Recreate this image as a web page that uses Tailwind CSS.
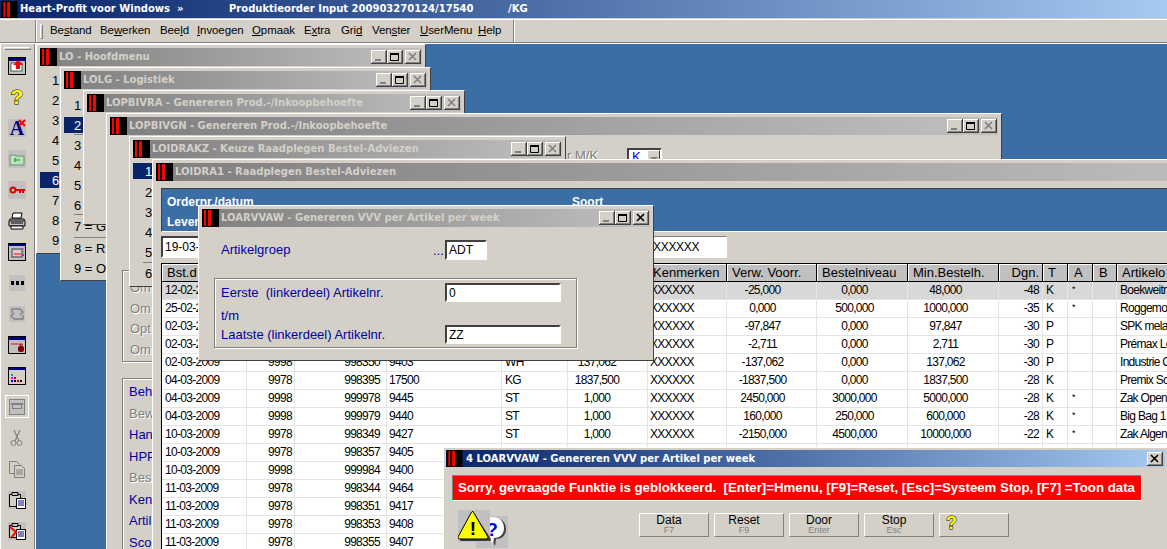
<!DOCTYPE html>
<html lang="nl">
<head>
<meta charset="UTF-8">
<script src="https://cdn.jsdelivr.net/npm/@tailwindcss/browser@4"></script>
<title>Heart-Profit voor Windows</title>
</head>
<body class="w-[1167px] h-[549px] overflow-hidden bg-[#d4d0c8] font-['Liberation_Sans',sans-serif] text-black text-[12px] leading-none">

<!-- shared icons -->
<svg class="hidden">
  <symbol id="rico" viewBox="0 0 17 18"><rect width="17" height="18" fill="#000"/><rect x="2" y="1" width="2" height="16" fill="#f00"/><rect x="6" y="1" width="3" height="16" fill="#f00"/></symbol>
  <symbol id="bmin" viewBox="0 0 16 14"><rect width="16" height="14" fill="#404040"/><rect width="15" height="13" fill="#fff"/><rect x="1" y="1" width="14" height="12" fill="#808080"/><rect x="1" y="1" width="13" height="11" fill="#d4d0c8"/><rect x="4" y="9" width="6" height="2" fill="#808080"/></symbol>
  <symbol id="bmax" viewBox="0 0 16 14"><rect width="16" height="14" fill="#404040"/><rect width="15" height="13" fill="#fff"/><rect x="1" y="1" width="14" height="12" fill="#808080"/><rect x="1" y="1" width="13" height="11" fill="#d4d0c8"/><path d="M3.5 3.5h8v7h-8z" fill="none" stroke="#000"/><rect x="3" y="3" width="9" height="2" fill="#000"/></symbol>
  <symbol id="bcls" viewBox="0 0 16 14"><rect width="16" height="14" fill="#404040"/><rect width="15" height="13" fill="#fff"/><rect x="1" y="1" width="14" height="12" fill="#808080"/><rect x="1" y="1" width="13" height="11" fill="#d4d0c8"/><path d="M4 3l7 7M11 3l-7 7" stroke="#808080" stroke-width="1.6"/></symbol>
  <symbol id="bclk" viewBox="0 0 16 14"><rect width="16" height="14" fill="#404040"/><rect width="15" height="13" fill="#fff"/><rect x="1" y="1" width="14" height="12" fill="#808080"/><rect x="1" y="1" width="13" height="11" fill="#d4d0c8"/><path d="M4 3l7 7M11 3l-7 7" stroke="#000" stroke-width="1.6"/></symbol>
</svg>

<!-- app title -->
<div class="flex items-center h-[18px] bg-linear-to-r from-[#0a246a] to-[#a6caf0] font-['DejaVu_Sans',sans-serif] font-bold text-[10px] text-white whitespace-pre">
  <svg class="w-[17px] h-[17px] ml-[1px] shrink-0"><use href="#rico"/></svg>
  <span class="ml-[2px] w-[209px]">Heart-Profit voor Windows  »</span>
  <span class="w-[279px]">Produktieorder Input 200903270124/17540</span>
  <span>/KG</span>
</div>

<!-- menu bar -->
<div class="flex h-[24px] border-y border-t-white border-b-[#808080] mt-px">
  <div class="w-[36px] border-r border-r-[#808080]"></div>
  <div class="flex items-center w-[478px] border-r border-l border-l-white border-r-[#808080] shadow-[1px_0_0_#fff]">
    <div class="w-[3px] h-[15px] ml-[3px] border border-t-white border-l-white border-r-[#808080] border-b-[#808080]"></div>
    <nav class="flex whitespace-nowrap text-[11.5px] tracking-[-0.1px] ml-[7px]">
      <span class="w-[50px]">Be<u>s</u>tand</span>
      <span class="w-[60px]">Be<u>w</u>erken</span>
      <span class="w-[37px]">Bee<u>l</u>d</span>
      <span class="w-[55px]"><u>I</u>nvoegen</span>
      <span class="w-[52px]"><u>O</u>pmaak</span>
      <span class="w-[37px]">E<u>x</u>tra</span>
      <span class="w-[31px]">Gri<u>d</u></span>
      <span class="w-[48px]">Ven<u>s</u>ter</span>
      <span class="w-[58px]"><u>U</u>serMenu</span>
      <span><u>H</u>elp</span>
    </nav>
  </div>
</div>

<div class="flex h-[506px] border-t border-t-white">
  <!-- left toolbar -->
  <aside class="w-[36px] shrink-0 border-r border-r-white shadow-[inset_-1px_0_0_#808080,inset_1px_0_0_#fff] pt-[3px]">
    <div class="h-[3px] mx-[4px] border border-t-white border-l-white border-r-[#808080] border-b-[#808080]"></div>
    <div class="flex flex-col items-center pr-[1px] [&>*]:h-[31px] [&>*]:flex [&>*]:items-center [&>*]:justify-center">
      <div><svg class="w-[18px] h-[18px]" viewBox="0 0 18 18"><rect x=".5" y=".5" width="17" height="17" fill="#c0c0c0" stroke="#000"/><rect x="1" y="1" width="16" height="3" fill="#000080"/><rect x="3" y="6" width="11" height="8" fill="#fff" stroke="#000" stroke-width=".6"/><path d="M10 3l5 5h-3v4H8V8H5z" fill="#f00"/></svg></div>
      <div><span class="font-bold text-[21px] text-[#ffff00] [-webkit-text-stroke:1px_#000] [paint-order:stroke_fill]">?</span></div>
      <div class="relative"><div class="relative w-[18px] h-[18px] bg-[#c0c0c0] flex items-center justify-center"><span class="font-['Liberation_Serif',serif] font-bold text-[20px] text-[#000080]">A</span><svg class="absolute right-0 top-0 w-[8px] h-[8px]" viewBox="0 0 8 8"><path d="M1 1l6 6M7 1l-6 6" stroke="#f00" stroke-width="2"/></svg></div></div>
      <div><svg class="w-[18px] h-[18px]" viewBox="0 0 18 18"><rect width="18" height="18" fill="#c0c0c0"/><path d="M2 5h5l1 1h8v9H2z" fill="#b0e8b0" stroke="#808080"/><path d="M6 10h6M6 10l2-2M6 10l2 2" stroke="#408040" fill="none"/></svg></div>
      <div><svg class="w-[18px] h-[18px]" viewBox="0 0 18 18"><rect width="18" height="18" fill="#c0c0c0"/><circle cx="5" cy="9" r="2.5" fill="none" stroke="#e00000" stroke-width="2"/><path d="M8 9h9M12 9v3M15 9v3" stroke="#e00000" stroke-width="2" fill="none"/></svg></div>
      <div><svg class="w-[18px] h-[18px]" viewBox="0 0 18 18"><path d="M5 1h9l-1 5H4z" fill="#fff" stroke="#000"/><path d="M2 7h14l1 2v5H1V9z" fill="#c0c0c0" stroke="#000"/><path d="M3 14h12v3H3z" fill="#fff" stroke="#000"/><path d="M2 9h14M3 11h12" stroke="#000"/></svg></div>
      <div><svg class="w-[18px] h-[18px]" viewBox="0 0 18 18"><rect x=".5" y=".5" width="17" height="17" fill="#c0c0c0" stroke="#000"/><rect x="1" y="1" width="16" height="2" fill="#000080"/><rect x="4" y="6" width="10" height="8" fill="#d4d0c8" stroke="#404040"/><path d="M6 11h7" stroke="#f00"/><path d="M15 5v2" stroke="#f0f"/><path d="M15 8v2" stroke="#0c0"/><path d="M15 11v2" stroke="#00f"/></svg></div>
      <div><svg class="w-[16px] h-[16px]" viewBox="0 0 16 16"><rect width="16" height="16" fill="#c0c0c0"/><path d="M2 6h3v4H2zM7 6h3v4H7zM12 6h3v4h-3z" fill="#000"/></svg></div>
      <div><svg class="w-[16px] h-[16px]" viewBox="0 0 16 16"><rect width="16" height="16" fill="#c0c0c0"/><path d="M3 7V3h8l3 3-3 3M14 9v4H5L2 10l3-3" fill="none" stroke="#808080" stroke-width="1.4"/></svg></div>
      <div><svg class="w-[18px] h-[18px]" viewBox="0 0 18 18"><rect x=".5" y=".5" width="17" height="17" fill="#c0c0c0" stroke="#000"/><rect x="1" y="1" width="16" height="3" fill="#000080"/><path d="M3 8h8" stroke="#f00"/><rect x="10" y="10" width="6" height="6" rx="2" fill="#800000"/><path d="M12 10V8h2v2" stroke="#800000" fill="none"/></svg></div>
      <div><svg class="w-[18px] h-[18px]" viewBox="0 0 18 18"><rect x=".5" y=".5" width="17" height="17" fill="#d4d0c8" stroke="#000"/><rect x="1" y="1" width="16" height="2" fill="#000080"/><rect x="3" y="7" width="2" height="2" fill="#0a8"/><rect x="3" y="10" width="2" height="2" fill="#f0f"/><rect x="3" y="13" width="2" height="2" fill="#00f"/><rect x="6" y="10" width="2" height="2" fill="#c00"/><rect x="6" y="13" width="2" height="2" fill="#000"/><rect x="9" y="13" width="2" height="2" fill="#c00"/><rect x="12" y="13" width="2" height="2" fill="#000"/></svg></div>
      <div><div class="flex items-center justify-center w-[24px] h-[23px] border border-t-white border-l-white border-r-white border-b-white"><svg class="w-[18px] h-[18px]" viewBox="0 0 18 18"><rect x="1.5" y="1.5" width="15" height="15" fill="#c0c0c0" stroke="#808080"/><rect x="3" y="5" width="12" height="2" fill="#808080"/><rect x="4.5" y="5.500" width="9" height="5" fill="none" stroke="#808080"/></svg></div></div>
      <div><svg class="w-[18px] h-[18px]" viewBox="0 0 18 18"><path d="M6 1l5 11M12 1L7 12" stroke="#808080" stroke-width="1.2"/><circle cx="5.500" cy="14" r="2.500" fill="none" stroke="#808080"/><circle cx="11.500" cy="14" r="2.500" fill="none" stroke="#808080"/></svg></div>
      <div><svg class="w-[18px] h-[18px]" viewBox="0 0 18 18"><path d="M1.500 1.500h7l3 3v9h-10z" fill="#d4d0c8" stroke="#808080"/><path d="M6.500 5.500h7l3 3v9h-10z" fill="#d4d0c8" stroke="#808080"/><path d="M8 10h7M8 12h7M8 14h7" stroke="#808080"/></svg></div>
      <div><svg class="w-[18px] h-[18px]" viewBox="0 0 18 18"><rect width="18" height="18" fill="#c0c0c0"/><path d="M1.500 3.500h11v12h-11z" fill="#d4d0c8" stroke="#000"/><path d="M4 3.500V1.500h6v3H4z" fill="#c0c0c0" stroke="#000"/><path d="M8.500 7.500h9v10h-9z" fill="#fff" stroke="#000"/><path d="M10 10h6M10 12h6M10 14h6" stroke="#000080"/></svg></div>
      <div><svg class="w-[18px] h-[18px]" viewBox="0 0 18 18"><rect width="18" height="18" fill="#c0c0c0"/><path d="M1.500 3.500h11v12h-11z" fill="#d4d0c8" stroke="#000"/><path d="M4 3.500V1.500h6v3H4z" fill="#c0c0c0" stroke="#000"/><path d="M8.500 7.500h9v10h-9z" fill="#fff" stroke="#000"/><path d="M10 10h6M10 12h6M10 14h6" stroke="#000080"/><path d="M2 5l6 5-5 6" fill="none" stroke="#f00" stroke-width="2"/></svg></div>
    </div>
  </aside>

  <!-- desktop with child windows -->
  <main class="relative flex-1 bg-[#3a6ea5] overflow-hidden">

    <!-- LO -->
    <section class="absolute left-0 top-0 w-[390px] h-[210px] bg-[#d4d0c8] border border-t-white border-l-white border-r-[#404040] border-b-[#404040] p-[3px]">
      <div class="flex items-center h-[18px] pr-[1px] bg-linear-to-r from-[#808080] to-[#c0c0c0]">
        <svg class="w-[17px] h-[18px] shrink-0"><use href="#rico"/></svg>
        <span class="ml-[2px] grow font-['DejaVu_Sans',sans-serif] font-bold text-[10px] text-[#d4d0c8]">LO - Hoofdmenu</span>
        <svg class="w-[16px] h-[14px]"><use href="#bmin"/></svg><svg class="w-[16px] h-[14px]"><use href="#bmax"/></svg><svg class="w-[16px] h-[14px] ml-[2px]"><use href="#bcls"/></svg>
      </div>
      <ul class="w-[19px] pt-[4px] text-[13px] [&>li]:h-[20px] [&>li]:flex [&>li]:items-center [&>li]:pl-[12px]">
        <li>1</li><li>2</li><li>3</li><li>4</li><li>5</li>
        <li class="!h-[16px] my-[2px] bg-[#0a246a] text-white">6</li>
        <li>7</li><li>8</li><li>9</li>
      </ul>
    </section>

    <!-- LOLG -->
    <section class="absolute left-[24px] top-[23px] w-[371px] h-[214px] bg-[#d4d0c8] border border-t-white border-l-white border-r-[#404040] border-b-[#404040] p-[3px]">
      <div class="flex items-center h-[18px] pr-[1px] bg-linear-to-r from-[#808080] to-[#c0c0c0]">
        <svg class="w-[17px] h-[18px] shrink-0"><use href="#rico"/></svg>
        <span class="ml-[2px] grow font-['DejaVu_Sans',sans-serif] font-bold text-[10px] text-[#d4d0c8]">LOLG - Logistiek</span>
        <svg class="w-[16px] h-[14px]"><use href="#bmin"/></svg><svg class="w-[16px] h-[14px]"><use href="#bmax"/></svg><svg class="w-[16px] h-[14px] ml-[2px]"><use href="#bcls"/></svg>
      </div>
      <ul class="pt-[6px] text-[13px] whitespace-nowrap [&>li]:h-[20px] [&>li]:flex [&>li]:items-center [&>li]:pl-[10px]">
        <li>1</li>
        <li class="w-[19px] !h-[16px] my-[2px] bg-[#0a246a] text-white">2</li>
        <li class="relative"><i class="absolute left-[10px] -top-px w-[9px] h-px bg-[#808080]"></i>3</li>
        <li>4</li><li>5</li><li>6</li>
        <li class="mt-[1px] relative"><i class="absolute left-[10px] -top-[2px] w-[9px] h-px bg-[#808080]"></i>7 = Gl</li>
        <li class="mt-[2px] relative"><i class="absolute left-[10px] -top-[1px] w-[33px] h-px bg-[#808080]"></i>8 = Ra</li>
        <li>9 = Ov</li>
      </ul>
    </section>

    <!-- LOPBIVRA -->
    <section class="absolute left-[47px] top-[46px] w-[382px] h-[135px] bg-[#d4d0c8] border border-t-white border-l-white border-r-[#404040] border-b-[#404040] p-[3px]">
      <div class="flex items-center h-[18px] pr-[1px] bg-linear-to-r from-[#808080] to-[#c0c0c0]">
        <svg class="w-[17px] h-[18px] shrink-0"><use href="#rico"/></svg>
        <span class="ml-[2px] grow font-['DejaVu_Sans',sans-serif] font-bold text-[10px] text-[#d4d0c8]">LOPBIVRA - Genereren Prod.-/Inkoopbehoefte</span>
        <svg class="w-[16px] h-[14px]"><use href="#bmin"/></svg><svg class="w-[16px] h-[14px]"><use href="#bmax"/></svg><svg class="w-[16px] h-[14px] ml-[2px]"><use href="#bcls"/></svg>
      </div>
    </section>

    <!-- LOPBIVGN -->
    <section class="absolute left-[70px] top-[69px] w-[896px] h-[440px] bg-[#d4d0c8] border border-t-white border-l-white border-r-[#404040] border-b-[#404040] p-[3px]">
      <div class="flex items-center h-[18px] pr-[1px] bg-linear-to-r from-[#808080] to-[#c0c0c0]">
        <svg class="w-[17px] h-[18px] shrink-0"><use href="#rico"/></svg>
        <span class="ml-[2px] grow font-['DejaVu_Sans',sans-serif] font-bold text-[10px] text-[#d4d0c8]">LOPBIVGN - Genereren Prod.-/Inkoopbehoefte</span>
        <svg class="w-[16px] h-[14px]"><use href="#bmin"/></svg><svg class="w-[16px] h-[14px]"><use href="#bmax"/></svg><svg class="w-[16px] h-[14px] ml-[2px]"><use href="#bcls"/></svg>
      </div>
      <!-- bit of the form that sticks out to the right of LOIDRAKZ -->
      <div class="flex items-start ml-[457px] mt-[13px] h-[30px] text-[13px] text-[#808080]">
        <span class="w-[60px] pt-[1px] [text-shadow:1px_1px_0_#fff]">r M/K</span>
        <div class="flex w-[35px] h-[22px] border-2 border-t-[#404040] border-l-[#404040] border-r-white border-b-white bg-white">
          <span class="pl-[3px] text-[#0000ff] grow">K</span>
          <span class="flex justify-center pt-[6px] w-[13px] bg-[#d4d0c8] border border-t-white border-l-white border-r-[#404040] border-b-[#404040]"><i class="border-x-[4px] border-t-[4px] border-x-transparent border-t-[#808080]"></i></span>
        </div>
      </div>
      <div class="ml-[12px] mt-[92px] w-[100px] h-[92px] border border-[#808080] shadow-[1px_1px_0_#fff,inset_1px_1px_0_#fff] pl-[7px] pt-[10px] text-[13px] text-[#808080] [text-shadow:1px_1px_0_#fff] [&>p]:h-[20.5px]">
        <p>Om</p><p>Om</p><p>Opt</p><p>Om</p>
      </div>
      <div class="ml-[12px] mt-[16px] w-[100px] h-[180px] border border-[#808080] shadow-[1px_1px_0_#fff,inset_1px_1px_0_#fff] pl-[6px] pt-[6px] text-[13px] text-[#0000a0] [&>p]:h-[21.5px]">
        <p>Beh</p>
        <p class="text-[#808080] [text-shadow:1px_1px_0_#fff]">Bew</p>
        <p>Han</p><p>HPP</p>
        <p class="text-[#808080] [text-shadow:1px_1px_0_#fff]">Bes</p>
        <p>Ken</p><p>Artil</p><p>Sco</p>
      </div>
    </section>

    <!-- LOIDRAKZ -->
    <section class="absolute left-[93px] top-[92px] w-[437px] h-[151px] bg-[#d4d0c8] border border-t-white border-l-white border-r-[#404040] border-b-[#404040] p-[3px]">
      <div class="flex items-center h-[18px] pr-[1px] bg-linear-to-r from-[#808080] to-[#c0c0c0]">
        <svg class="w-[17px] h-[18px] shrink-0"><use href="#rico"/></svg>
        <span class="ml-[2px] grow font-['DejaVu_Sans',sans-serif] font-bold text-[10px] text-[#d4d0c8]">LOIDRAKZ - Keuze Raadplegen Bestel-Adviezen</span>
        <svg class="w-[16px] h-[14px]"><use href="#bmin"/></svg><svg class="w-[16px] h-[14px]"><use href="#bmax"/></svg><svg class="w-[16px] h-[14px] ml-[2px]"><use href="#bcls"/></svg>
      </div>
      <ul class="pt-[5px] text-[13px] [&>li]:h-[20px] [&>li]:flex [&>li]:items-center [&>li]:pl-[12px]">
        <li class="w-[19px] !h-[16px] mb-[3px] bg-[#0a246a] text-white">1</li>
        <li class="mt-px">2</li><li>3</li><li>4</li><li>5</li>
        <li class="relative mt-[1px]"><i class="absolute left-[10px] -top-px w-[9px] h-px bg-[#808080]"></i>6</li>
      </ul>
    </section>

    <!-- LOIDRA1 -->
    <section class="absolute left-[116px] top-[115px] w-[1100px] h-[420px] bg-[#d4d0c8] border border-t-white border-l-white border-r-[#404040] border-b-[#404040] p-[3px]">
      <div class="flex items-center h-[18px] pr-[1px] bg-linear-to-r from-[#808080] to-[#c0c0c0]">
        <svg class="w-[17px] h-[18px] shrink-0"><use href="#rico"/></svg>
        <span class="ml-[2px] grow font-['DejaVu_Sans',sans-serif] font-bold text-[10px] text-[#d4d0c8]">LOIDRA1 - Raadplegen Bestel-Adviezen</span>
      </div>
      <div class="ml-[5px] mt-[7px] h-[44px] bg-[#3a6ea5] border border-t-[#404040] border-l-[#404040] border-b-white border-r-white pl-[5px] pt-[3px] font-bold text-[12px] text-white">
        <div class="flex items-center h-[20px]"><span class="w-[405px]">Ordernr./datum</span><span>Soort</span></div>
        <div class="flex items-center h-[20px]">Lever</div>
      </div>
      <div class="flex ml-[5px] mt-[4px] h-[22px] text-[12px]">
        <div class="w-[130px] border-2 border-t-[#404040] border-l-[#404040] border-r-white border-b-white bg-white pl-[2px] flex items-center">19-03-</div>
        <div class="ml-[300px] w-[136px] border border-t-[#808080] border-l-[#808080] border-r-white border-b-white bg-white pl-[61px] flex items-center tracking-[-0.3px]">XXXXXX</div>
      </div>
      <div class="ml-[5px] mt-[5px] border-t border-l border-black text-[12px] tracking-[-0.7px]">
        <table class="table-fixed border-separate border-spacing-0 w-[1040px]
          [&_th]:h-[18px] [&_th]:p-0 [&_th]:pl-[5px] [&_th]:bg-[#c0c0c0] [&_th]:font-normal [&_th]:text-left [&_th]:text-[13px] [&_th]:tracking-normal [&_th]:border-r [&_th]:border-b [&_th]:border-black [&_th]:shadow-[inset_1px_1px_0_#fff] [&_th]:whitespace-nowrap
          [&_td]:h-[18px] [&_td]:p-0 [&_td]:pb-[2px] [&_td]:border-r [&_td]:border-b [&_td]:border-[#e4e4e4] [&_td]:whitespace-nowrap [&_td]:overflow-hidden
          [&_td:nth-child(1)]:pl-[3px] [&_td:nth-child(2)]:text-right [&_td:nth-child(2)]:pr-[2px] [&_td:nth-child(3)]:text-right [&_td:nth-child(3)]:pr-[6px] [&_td:nth-child(4)]:pl-[2px] [&_td:nth-child(5)]:pl-[3px]
          [&_td:nth-child(6)]:text-center [&_td:nth-child(6)]:pr-[21px] [&_td:nth-child(7)]:pl-[2px] [&_td:nth-child(8)]:text-center [&_td:nth-child(8)]:pr-[18px] [&_td:nth-child(9)]:text-center [&_td:nth-child(9)]:pr-[15px] [&_td:nth-child(10)]:text-center [&_td:nth-child(10)]:pr-[15px]
          [&_td:nth-child(11)]:text-right [&_td:nth-child(11)]:pr-[3px] [&_td:nth-child(12)]:pl-[3px] [&_td:nth-child(13)]:pl-[4px] [&_td:nth-child(13)]:text-[9px] [&_td:nth-child(15)]:pl-[3px]">
          <colgroup>
            <col class="w-[85px]"><col class="w-[48px]"><col class="w-[92px]"><col class="w-[115px]"><col class="w-[66px]"><col class="w-[80px]"><col class="w-[79px]"><col class="w-[90px]"><col class="w-[91px]"><col class="w-[91px]"><col class="w-[44px]"><col class="w-[25px]"><col class="w-[25px]"><col class="w-[24px]"><col>
          </colgroup>
          <thead>
            <tr><th>Bst.d</th><th></th><th></th><th></th><th></th><th></th><th>Kenmerken</th><th>Verw. Voorr.</th><th>Bestelniveau</th><th>Min.Bestelh.</th><th class="!text-right !pr-[3px]">Dgn.</th><th>T</th><th class="!pl-[6px]">A</th><th class="!pl-[6px]">B</th><th>Artikelo</th></tr>
          </thead>
          <tbody>
            <tr class="bg-[#d8d8d8]"><td>12-02-2</td><td></td><td></td><td></td><td></td><td></td><td>XXXXXX</td><td>-25,000</td><td>0,000</td><td>48,000</td><td>-48</td><td>K</td><td>*</td><td></td><td>Boekweitr</td></tr>
            <tr class="bg-white"><td>25-02-2</td><td></td><td></td><td></td><td></td><td></td><td>XXXXXX</td><td>0,000</td><td>500,000</td><td>1000,000</td><td>-35</td><td>K</td><td>*</td><td></td><td>Roggemo</td></tr>
            <tr class="bg-white"><td>02-03-2</td><td></td><td></td><td></td><td></td><td></td><td>XXXXXX</td><td>-97,847</td><td>0,000</td><td>97,847</td><td>-30</td><td>P</td><td></td><td></td><td>SPK mela</td></tr>
            <tr class="bg-white"><td>02-03-2</td><td></td><td></td><td></td><td></td><td></td><td>XXXXXX</td><td>-2,711</td><td>0,000</td><td>2,711</td><td>-30</td><td>P</td><td></td><td></td><td>Prémax Le</td></tr>
            <tr class="bg-white"><td>02-03-2009</td><td>9998</td><td>998350</td><td>9403</td><td>WH</td><td>137,062</td><td>XXXXXX</td><td>-137,062</td><td>0,000</td><td>137,062</td><td>-30</td><td>P</td><td></td><td></td><td>Industrie C</td></tr>
            <tr class="bg-white"><td>04-03-2009</td><td>9978</td><td>998395</td><td>17500</td><td>KG</td><td>1837,500</td><td>XXXXXX</td><td>-1837,500</td><td>0,000</td><td>1837,500</td><td>-28</td><td>K</td><td></td><td></td><td>Premix Sc</td></tr>
            <tr class="bg-white"><td>04-03-2009</td><td>9998</td><td>999978</td><td>9445</td><td>ST</td><td>1,000</td><td>XXXXXX</td><td>2450,000</td><td>3000,000</td><td>5000,000</td><td>-28</td><td>K</td><td>*</td><td></td><td>Zak Open</td></tr>
            <tr class="bg-white"><td>04-03-2009</td><td>9998</td><td>999979</td><td>9440</td><td>ST</td><td>1,000</td><td>XXXXXX</td><td>160,000</td><td>250,000</td><td>600,000</td><td>-28</td><td>K</td><td>*</td><td></td><td>Big Bag 1</td></tr>
            <tr class="bg-white"><td>10-03-2009</td><td>9978</td><td>998349</td><td>9427</td><td>ST</td><td>1,000</td><td>XXXXXX</td><td>-2150,000</td><td>4500,000</td><td>10000,000</td><td>-22</td><td>K</td><td>*</td><td></td><td>Zak Algen</td></tr>
            <tr class="bg-white"><td>10-03-2009</td><td>9978</td><td>998357</td><td>9405</td><td></td><td></td><td></td><td></td><td></td><td></td><td></td><td></td><td></td><td></td><td></td></tr>
            <tr class="bg-white"><td>10-03-2009</td><td>9998</td><td>999984</td><td>9400</td><td></td><td></td><td></td><td></td><td></td><td></td><td></td><td></td><td></td><td></td><td></td></tr>
            <tr class="bg-white"><td>11-03-2009</td><td>9978</td><td>998344</td><td>9464</td><td></td><td></td><td></td><td></td><td></td><td></td><td></td><td></td><td></td><td></td><td></td></tr>
            <tr class="bg-white"><td>11-03-2009</td><td>9978</td><td>998351</td><td>9417</td><td></td><td></td><td></td><td></td><td></td><td></td><td></td><td></td><td></td><td></td><td></td></tr>
            <tr class="bg-white"><td>11-03-2009</td><td>9978</td><td>998353</td><td>9408</td><td></td><td></td><td></td><td></td><td></td><td></td><td></td><td></td><td></td><td></td><td></td></tr>
            <tr class="bg-white"><td>11-03-2009</td><td>9978</td><td>998355</td><td>9407</td><td></td><td></td><td></td><td></td><td></td><td></td><td></td><td></td><td></td><td></td><td></td></tr>
          </tbody>
        </table>
      </div>
    </section>

    <!-- LOARVVAW dialog -->
    <section class="absolute left-[162px] top-[161px] w-[456px] h-[156px] bg-[#d4d0c8] border border-t-white border-l-white border-r-[#404040] border-b-[#404040] p-[3px]">
      <div class="flex items-center h-[18px] pr-[1px] bg-linear-to-r from-[#808080] to-[#c0c0c0]">
        <svg class="w-[17px] h-[18px] shrink-0"><use href="#rico"/></svg>
        <span class="ml-[2px] grow font-['DejaVu_Sans',sans-serif] font-bold text-[10px] text-[#d4d0c8]">LOARVVAW - Genereren VVV per Artikel per week</span>
        <svg class="w-[16px] h-[14px]"><use href="#bmin"/></svg><svg class="w-[16px] h-[14px]"><use href="#bmax"/></svg><svg class="w-[16px] h-[14px] ml-[2px]"><use href="#bclk"/></svg>
      </div>
      <div class="flex items-center mt-[13px] pl-[19px] text-[13px] text-[#0000a0]">
        <span class="w-[212px] pb-[2px]">Artikelgroep</span>
        <span class="w-[12px]">...</span>
        <div class="flex items-center w-[42px] h-[20px] pl-[2px] border-2 border-t-[#404040] border-l-[#404040] border-r-white border-b-white bg-white text-[12px] text-black">ADT</div>
      </div>
      <div class="ml-[12px] mt-[18px] w-[363px] h-[70px] border border-[#808080] shadow-[1px_1px_0_#fff,inset_1px_1px_0_#fff] pl-[6px] pt-[4px] text-[13px] text-[#0000a0]">
        <div class="flex items-center h-[19px]"><span class="w-[224px] whitespace-pre">Eerste  (linkerdeel) Artikelnr.</span><div class="flex items-center w-[116px] h-[19px] pl-[2px] border-2 border-t-[#404040] border-l-[#404040] border-r-white border-b-white bg-white text-[12px] text-black">0</div></div>
        <div class="flex items-center h-[23px] pt-[3px]">t/m</div>
        <div class="flex items-center h-[19px]"><span class="w-[224px]">Laatste (linkerdeel) Artikelnr.</span><div class="flex items-center w-[116px] h-[19px] pl-[2px] border-2 border-t-[#404040] border-l-[#404040] border-r-white border-b-white bg-white text-[12px] text-black">ZZ</div></div>
      </div>
    </section>

    <!-- blocked function message -->
    <section class="absolute left-[407px] top-[403px] w-[724px] h-[103px] bg-[#d4d0c8] border-t border-l border-t-white border-l-white p-[2px]">
      <div class="flex items-center h-[17px] pr-[2px] bg-linear-to-r from-[#0a246a] to-[#a6caf0]">
        <svg class="w-[17px] h-[17px] shrink-0"><use href="#rico"/></svg>
        <span class="ml-[3px] grow font-['DejaVu_Sans',sans-serif] font-bold text-[10px] text-white">4 LOARVVAW - Genereren VVV per Artikel per week</span>
        <svg class="w-[16px] h-[14px]"><use href="#bclk"/></svg>
      </div>
      <div class="flex items-center ml-[6px] mt-[8px] w-[690px] h-[26px] pl-[5px] bg-[#ff0000] border border-t-[#808080] border-l-[#808080] border-r-white border-b-white font-bold text-[13.25px] text-white whitespace-pre">Sorry, gevraagde Funktie is geblokkeerd.  [Enter]=Hmenu, [F9]=Reset, [Esc]=Systeem Stop, [F7] =Toon data</div>
      <div class="flex items-start ml-[12px] mt-[9px]">
        <svg class="w-[50px] h-[38px] shrink-0" viewBox="0 0 50 38">
          <rect x="18" y="6" width="32" height="32" fill="#c0c0c0"/>
          <path d="M28 10c8-4 20-2 20 9 0 7-5 10-10 10l-1 7-4-7c-5-1-7-5-7-10z" fill="#404040"/>
          <path d="M26 9c8-4 20-2 20 9 0 7-5 10-10 10l-1 6-4-6c-5-1-7-5-7-10z" fill="#fff"/>
          <text x="34" y="26" font-family="Liberation Sans" font-weight="700" font-size="19" fill="#0000e0" text-anchor="middle">?</text>
          <rect width="32" height="32" fill="#c0c0c0"/>
          <path d="M15 2L32 28q.5 2-2 2H3q-2.500 0-2-2z" fill="#404040" transform="translate(1 1)"/>
          <path d="M15 1.500L30 27q.500 2-2 2H2q-2.500 0-2-2L13 3q1-2 2-1.500z" fill="#ffff00" stroke="#000" stroke-width="1"/>
          <text x="15" y="25" font-family="Liberation Sans" font-weight="700" font-size="19" fill="#000" text-anchor="middle">!</text>
        </svg>
        <div class="flex gap-[5px] ml-[131px] mt-[3px] [&>button]:w-[70px] [&>button]:h-[24px] [&>button]:flex [&>button]:flex-col [&>button]:items-center [&>button]:pr-[10px] [&>button]:border [&>button]:border-t-white [&>button]:border-l-white [&>button]:border-r-[#808080] [&>button]:border-b-[#808080] [&>button]:text-[12px]">
          <button>Data<small class="text-[9px] text-[#808080]">F7</small></button>
          <button>Reset<small class="text-[9px] text-[#808080]">F9</small></button>
          <button>Door<small class="text-[9px] text-[#808080]">Enter</small></button>
          <button>Stop<small class="text-[9px] text-[#808080]">Esc</small></button>
          <button class="!items-start pl-[6px]"><span class="font-bold text-[18px] text-[#ffff00] [-webkit-text-stroke:1px_#000] [paint-order:stroke_fill]">?</span></button>
        </div>
      </div>
    </section>
  </main>
</div>
</body>
</html>
